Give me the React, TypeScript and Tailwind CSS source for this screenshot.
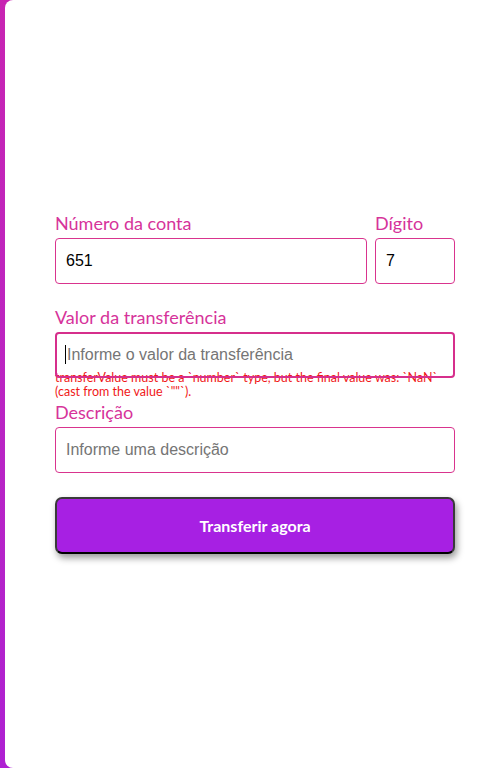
export default function App() {
    const labelCls = 'block text-[18px] leading-6 text-[#d6339a]';
    const inputCls =
        'w-full h-[46px] rounded-[4px] border border-[#d9348e] bg-transparent px-[10px] text-[16px] text-black placeholder:text-[#757575] outline-none';

    return (
        <div
            className="min-h-[768px] w-full bg-gradient-to-b from-[#c824b2] to-[#ae20d2] pl-[5px]"
            style={{ fontFamily: 'Lato, "Open Sans", sans-serif' }}
        >
            <div className="min-h-[768px] rounded-l-[8px] bg-white pl-[50px] pr-[45px] pt-[211px]">
                <form className="flex flex-col" onSubmit={(e) => e.preventDefault()}>
                    {/* ── Conta + dígito ─────────────────────────────────────── */}
                    <div className="flex gap-2">
                        <div className="flex-1">
                            <label className={labelCls}>Número da conta</label>
                            <input
                                className={`${inputCls} mt-[3px]`}
                                style={{ fontFamily: '"Liberation Sans", Arial, sans-serif' }}
                                defaultValue="651"
                            />
                        </div>
                        <div className="w-[80px]">
                            <label className={labelCls}>Dígito</label>
                            <input
                                className={`${inputCls} mt-[3px]`}
                                style={{ fontFamily: '"Liberation Sans", Arial, sans-serif' }}
                                defaultValue="7"
                            />
                        </div>
                    </div>

                    {/* ── Valor ──────────────────────────────────────────────── */}
                    <div className="mt-[21px]">
                        <label className={labelCls}>Valor da transferência</label>
                        <div className="relative z-10 mt-[3px]">
                            <input
                                className="w-full h-[46px] rounded-[4px] border-2 border-[#d62f8c] bg-transparent pl-[10px] pr-[10px] text-[16px] text-black placeholder:text-[#757575] outline-none"
                                style={{ fontFamily: '"Liberation Sans", Arial, sans-serif' }}
                                placeholder="Informe o valor da transferência"
                            />
                            <span className="absolute left-[10px] top-[13px] h-[19px] w-px bg-black" />
                        </div>
                        <p className="-mt-[7px] text-[12.5px] leading-[14px] text-[#f01818]">
                            transferValue must be a `number` type, but the final value was: `NaN` (cast from the value `""`).
                        </p>
                    </div>

                    {/* ── Descrição ──────────────────────────────────────────── */}
                    <div className="mt-[1px]">
                        <label className={labelCls}>Descrição</label>
                        <input
                            className={`${inputCls} mt-[3px] h-[45px]`}
                            style={{ fontFamily: '"Liberation Sans", Arial, sans-serif' }}
                            placeholder="Informe uma descrição"
                        />
                    </div>

                    <button
                        type="submit"
                        className="mt-[24px] h-[57px] w-full rounded-[7px] border-2 border-[#3a3a3a] border-b-black bg-[#a720e3] text-[16px] font-bold text-white shadow-[2px_4px_7px_rgba(0,0,0,0.4)]"
                    >
                        Transferir agora
                    </button>
                </form>
            </div>
        </div>
    );
}
